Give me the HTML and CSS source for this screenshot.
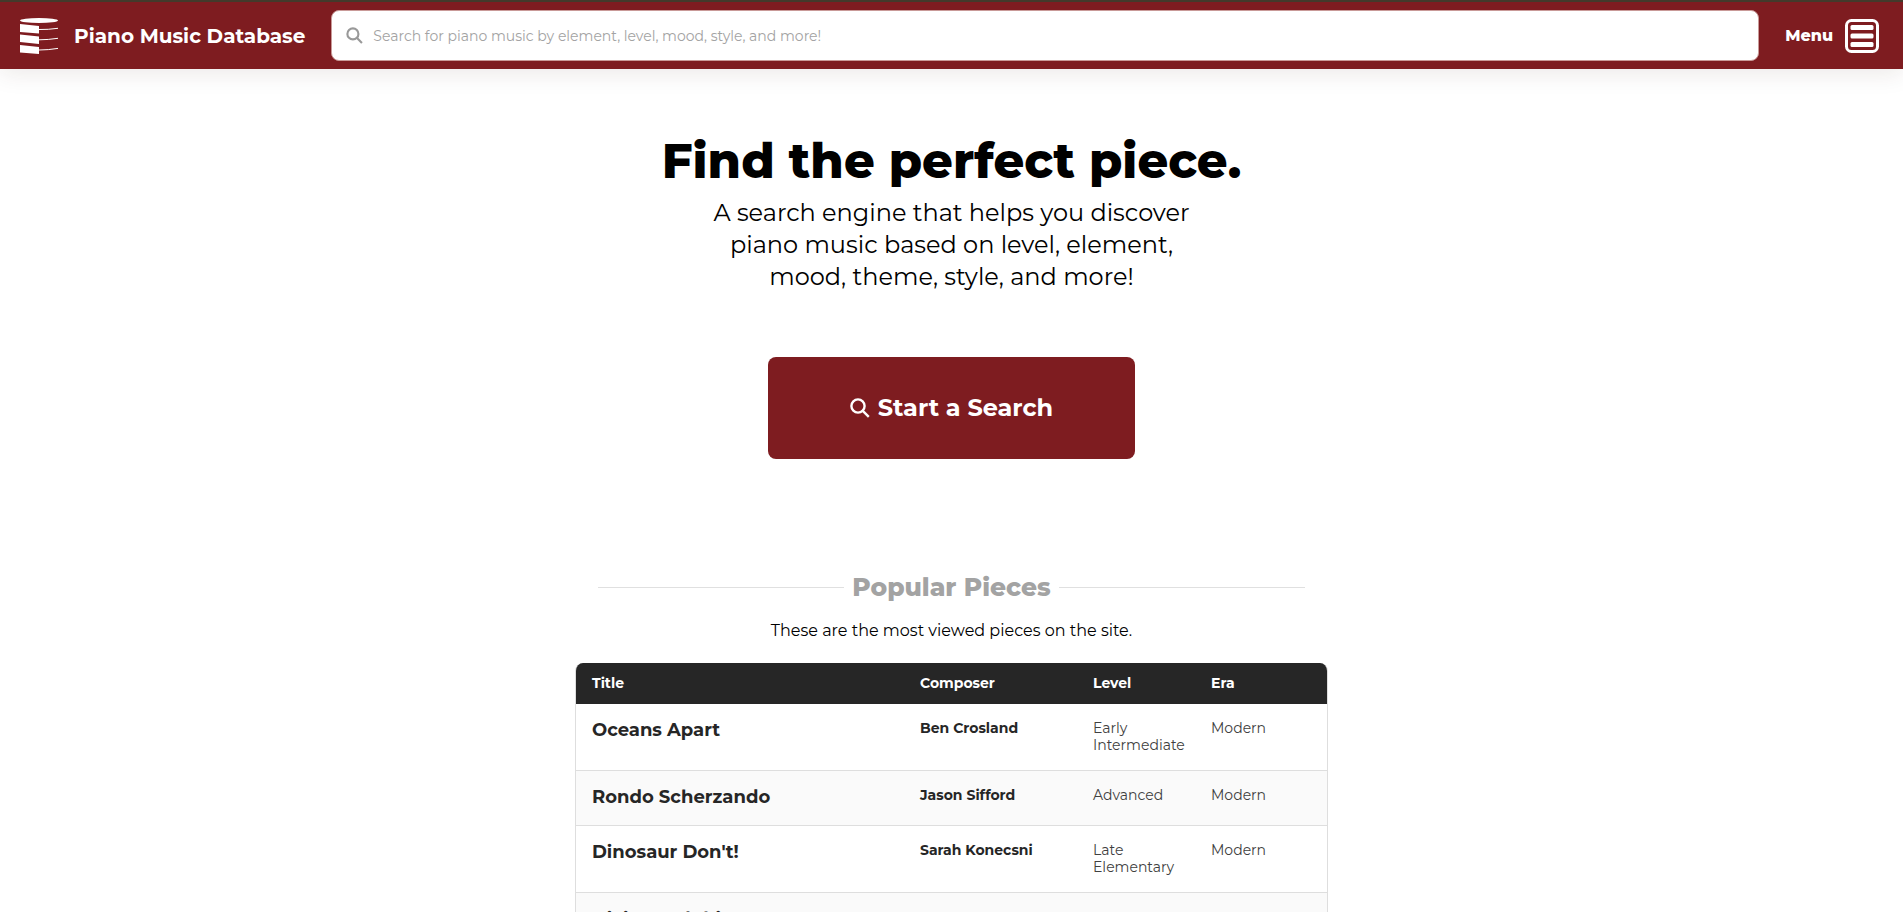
FILE: index.html
```html
<!DOCTYPE html>
<html lang="en">
<head>
<meta charset="utf-8">
<meta name="viewport" content="width=device-width, initial-scale=1">
<title>Piano Music Database</title>
<link rel="stylesheet" href="styles.css">
</head>
<body>
<header class="site-header">
  <a class="brand" href="#">
    <svg class="brand-logo" viewBox="0 0 38 36" aria-hidden="true">
      <ellipse cx="19" cy="2.500" rx="19" ry="2.500"/>
      <path d="M0 6 19 8V15.500L0 14ZM0 16.500 19 18.500V26L0 24ZM0 27 19 29V36L0 34.500Z"/>
      <path class="brand-line" d="M19 11.500Q28 11.700 38 10.300M19 21.800Q28 21.800 38 20.300M19 32Q28 32 38 30.400"/>
    </svg>
    <span>Piano Music Database</span>
  </a>
  <form class="search" role="search">
    <svg class="search-icon" viewBox="0 0 16 16" aria-hidden="true"><circle cx="6.500" cy="6.500" r="5.200"/><path d="m10.400 10.400 4.600 4.600"/></svg>
    <input class="search-input" type="search" aria-label="Search" placeholder="Search for piano music by element, level, mood, style, and more!">
  </form>
  <button class="menu" type="button">
    <span>Menu</span>
    <svg class="menu-icon" viewBox="0 0 34 34" aria-hidden="true"><rect class="menu-frame" x="1.500" y="1.500" width="31" height="31" rx="5"/><rect x="5.500" y="6" width="23" height="5" rx="1.500"/><rect x="5.500" y="14.500" width="23" height="5" rx="1.500"/><rect x="5.500" y="23" width="23" height="5" rx="1.500"/></svg>
  </button>
</header>
<main>
  <section class="hero">
    <h1 class="hero-title">Find the perfect piece.</h1>
    <p class="hero-text">A search engine that helps you discover piano music based on level, element, mood, theme, style, and more!</p>
    <a class="start" href="#">
      <svg class="start-icon" viewBox="0 0 20 20" aria-hidden="true"><circle cx="8" cy="8" r="6.600"/><path d="m12.800 12.800 6 6"/></svg>
      <span>Start a Search</span>
    </a>
  </section>
  <section class="popular">
    <h2 class="popular-title">Popular Pieces</h2>
    <p class="popular-text">These are the most viewed pieces on the site.</p>
    <div class="table-frame">
      <table class="pieces">
        <colgroup><col class="col-title"><col class="col-composer"><col class="col-level"><col class="col-era"></colgroup>
        <thead><tr><th scope="col">Title</th><th scope="col">Composer</th><th scope="col">Level</th><th scope="col">Era</th></tr></thead>
        <tbody>
          <tr><td><a class="piece" href="#">Oceans Apart</a></td><td><a class="composer" href="#">Ben Crosland</a></td><td>Early Intermediate</td><td>Modern</td></tr>
          <tr><td><a class="piece" href="#">Rondo Scherzando</a></td><td><a class="composer" href="#">Jason Sifford</a></td><td>Advanced</td><td>Modern</td></tr>
          <tr><td><a class="piece" href="#">Dinosaur Don't!</a></td><td><a class="composer" href="#">Sarah Konecsni</a></td><td>Late Elementary</td><td>Modern</td></tr>
          <tr><td><a class="piece" href="#">Diving Dolphins</a></td><td></td><td></td><td></td></tr>
        </tbody>
      </table>
    </div>
  </section>
</main>
</body>
</html>
```
FILE: styles.css
```css
* { box-sizing: border-box; }

body {
  margin: 0;
  background: #fff;
  color: #000;
  font-family: Montserrat, Inter, sans-serif;
}

a { color: inherit; text-decoration: none; }

.site-header {
  display: flex;
  align-items: center;
  padding: 8px 24px 8px 20px;
  border-top: 2px solid #433a2b;
  background: #7e1c20;
  color: #fff;
  box-shadow: 0 4px 24px rgba(60, 30, 20, 0.1);
}

.brand {
  display: flex;
  align-items: center;
  gap: 16px;
  margin-right: 26px;
  font-size: 20px;
  font-weight: 700;
  line-height: 28px;
}

.brand-logo { width: 38px; height: 36px; fill: #fff; }
.brand-line { fill: none; stroke: #fff; stroke-width: 1; }

.search {
  display: flex;
  flex: 1;
  align-items: center;
  gap: 10px;
  height: 51px;
  padding: 0 14px;
  border: 1px solid #c99a98;
  border-radius: 8px;
  background: #fff;
}

.search-icon { width: 17px; height: 17px; fill: none; stroke: #999; stroke-width: 2; }

.search-input {
  flex: 1;
  min-width: 0;
  padding: 0;
  border: 0;
  outline: 0;
  background: none;
  font: 400 14px/20px Montserrat, Inter, sans-serif;
}

.search-input::placeholder { color: #a3a3a3; opacity: 1; }

.menu {
  display: flex;
  align-items: center;
  gap: 12px;
  margin-left: 26px;
  padding: 0;
  border: 0;
  background: none;
  color: #fff;
  font: 800 16px/20px Montserrat, Inter, sans-serif;
}

.menu-icon { width: 34px; height: 34px; fill: #fff; }
.menu-frame { fill: none; stroke: #fff; stroke-width: 3; }

.hero {
  display: flex;
  flex-direction: column;
  align-items: center;
  padding-top: 63px;
  text-align: center;
}

.hero-title { margin: 0; font-size: 48px; font-weight: 800; line-height: 58px; }
.hero-text { max-width: 520px; margin: 7px 0 0; font-size: 24px; font-weight: 400; line-height: 32px; }

.start {
  display: flex;
  align-items: center;
  gap: 8px;
  margin-top: 64px;
  padding: 35px 82px;
  border-radius: 8px;
  background: #7e1c20;
  color: #fff;
  font-size: 24px;
  font-weight: 700;
  line-height: 32px;
}

.start-icon { width: 20px; height: 20px; fill: none; stroke: #fff; stroke-width: 2.4; }

.popular { max-width: 753px; margin: 112px auto 0; }

.popular-title {
  display: flex;
  align-items: center;
  gap: 8px;
  margin: 0 23px;
  color: #a3a3a3;
  font-size: 25px;
  font-weight: 800;
  line-height: 32px;
}

.popular-title::before,
.popular-title::after { flex: 1; height: 1px; background: #e0e0e0; content: ""; }

.popular-text { margin: 16px 0 20px; font-size: 16px; line-height: 24px; text-align: center; }

.table-frame { overflow: hidden; border: 1px solid #dedede; border-top: 0; border-radius: 8px; }
.pieces { width: 100%; border-collapse: collapse; table-layout: fixed; font-size: 14px; line-height: 17px; }
.pieces thead { background: #262626; color: #fff; }
.pieces th { padding: 12px 16px; font-weight: 700; text-align: left; }
.pieces td { padding: 16px 0 16px 16px; color: #404040; font-weight: 400; vertical-align: top; }
.pieces tbody tr + tr { border-top: 1px solid #dedede; }
.pieces tbody tr:nth-child(even) { background: #fafafa; }
.col-title { width: 328px; }
.col-composer { width: 173px; }
.col-level { width: 118px; }
.piece { display: block; margin-bottom: 2px; color: #262626; font-size: 18px; font-weight: 700; line-height: 20px; }
.composer { color: #262626; font-weight: 700; }
```
